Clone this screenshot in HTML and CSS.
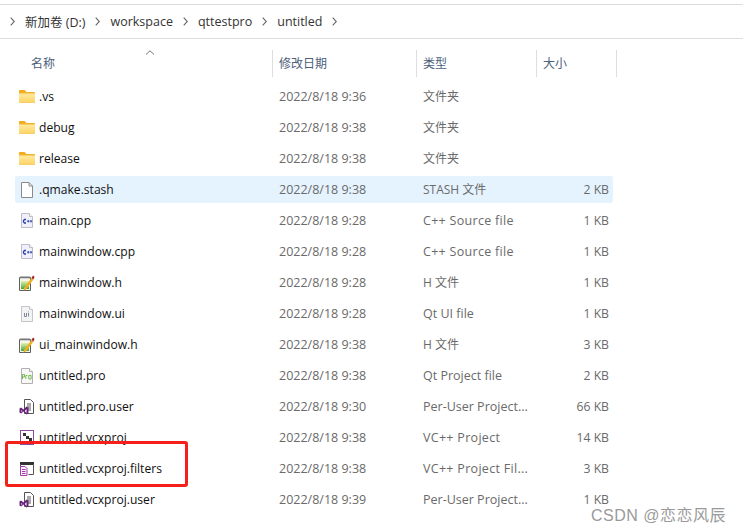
FILE: index.html
```html
<!DOCTYPE html>
<html lang="zh-CN">
<head>
<meta charset="utf-8">
<title>untitled</title>
<link rel="stylesheet" href="styles.css">
</head>
<body>
<svg class="defs" width="0" height="0" aria-hidden="true">
  <defs>
    <linearGradient id="fold" x1="0" y1="0" x2="0" y2="1"><stop offset="0" stop-color="#ffe9a0"/><stop offset="1" stop-color="#fcd566"/></linearGradient>
    <linearGradient id="note" x1="0" y1="0" x2="0" y2="1"><stop offset="0" stop-color="#e8f0b0"/><stop offset="1" stop-color="#3fa53a"/></linearGradient>
    <symbol id="i-chev" viewBox="0 0 5 9">
      <path d="M.7.7 4.300 4.500.7 8.300" fill="none" stroke="#666" stroke-width="1.100"/>
    </symbol>
    <symbol id="i-folder" viewBox="0 0 16 16">
      <path d="M0 2C0 1.500.4 1 1 1h4.500L7.500 3H0Z" fill="#f0ac1a"/>
      <path d="M0 3h15.200c.4 0 .8.3.8.8v9c0 .5-.4.900-.9.900H.9c-.5 0-.9-.4-.9-.9Z" fill="#f2b32b"/>
      <path d="M0 4.500h16v8.200c0 .5-.4.8-.8.8H.8c-.5 0-.8-.3-.8-.8Z" fill="url(#fold)"/>
    </symbol>
    <symbol id="i-blank" viewBox="0 0 16 16">
      <path d="M2.500.500h7.500l3.500 3.500V15.500H2.500Z" fill="#fff" stroke="#8a8a8a"/>
      <path d="M10 .5V4h3.500" fill="none" stroke="#8a8a8a"/>
    </symbol>
    <symbol id="i-cpp" viewBox="0 0 16 16">
      <path d="M2.500.500h8l3 3V14.500H2.500Z" fill="#f1f0fa" stroke="#bdbdc6"/>
      <path d="M10.500.500v3h3" fill="#fff" stroke="#bdbdc6"/>
      <path d="M7 6.500H5.500L4.500 7.500v1.500l1 1H7" fill="none" stroke="#2a3fa8" stroke-width="1.300"/>
      <path d="M8 8.200h2.400M9.200 7v2.500M10.800 8.200h2.400M12 7v2.500" fill="none" stroke="#2a3fa8" stroke-width=".9"/>
    </symbol>
    <symbol id="i-h" viewBox="0 0 16 16">
      <path d="M.5 2.500h11v13H.5Z" fill="#f6f6f0" stroke="#5f5f5f"/>
      <path d="M1 2.500h10M2 1v2.500M4 1v2.500M6 1v2.500M8 1v2.500M10 1v2.500" stroke="#777" fill="none"/>
      <rect x="2" y="6" width="8" height="8" fill="url(#note)"/>
      <path d="M5 13 12.500 3l2 1.500L7 14.500l-2.500 1Z" fill="#f0b020"/>
      <path d="M12.500 3 14 .5l1.500 1.200-1 2.800Z" fill="#a3232b"/>
    </symbol>
    <symbol id="i-ui" viewBox="0 0 16 16">
      <path d="M2.500.500h8l3 3V15.500H2.500Z" fill="#f3f3f6" stroke="#c4c4ca"/>
      <path d="M10.500.500v3h3" fill="#fff" stroke="#c4c4ca"/>
      <path d="M5.500 7v3.500h2V7M9.500 7v3.500M9.500 5.500v.8" fill="none" stroke="#7d8a9c"/>
    </symbol>
    <symbol id="i-pro" viewBox="0 0 16 16">
      <path d="M2.500.500h8l3 3V15.500H2.500Z" fill="#f7f7f7" stroke="#b0b0b0"/>
      <path d="M10.500.500v3h3" fill="#fff" stroke="#b0b0b0"/>
      <path d="M3.500 11V6.500h2v2.500h-2M6.800 11V7.500h1.600M9.800 7.500h2.300V11H9.800Z" fill="none" stroke="#6db33f" stroke-width=".9"/>
    </symbol>
    <symbol id="i-user" viewBox="0 0 16 16">
      <path d="M5.500.500h6l3 3v11h-9Z" fill="#fff" stroke="#555"/>
      <path d="M8 5h4M8 7h4M9 9h3M9 11h3" stroke="#555" fill="none"/>
      <path d="M.5 9.500 2 8.500l2.500 2 3-3 2 1v6l-2 1-3-3-2.500 2-1.500-1Zm1.800 1.500v2l1.200-1Zm5.200-.9L5.800 12l1.700 1.900Z" fill="#68217a"/>
    </symbol>
    <symbol id="i-proj" viewBox="0 0 16 16">
      <rect x="1.500" y=".5" width="13" height="14" fill="#fff" stroke="#8e4a9e"/>
      <path d="M4 3h3v3H4ZM7 6h3v3H7ZM10 8h3v3h-3Z" fill="#333"/>
    </symbol>
    <symbol id="i-filters" viewBox="0 0 16 16">
      <rect x="1" y="1" width="14" height="3" fill="#333"/>
      <path d="M1.500 3v3M14.500 3v10.500H9.500" fill="none" stroke="#555"/>
      <path d="M1.500 5.500h4.500l2 2v7H1.500Z" fill="#f7eef9" stroke="#a23fa8"/>
      <path d="M3 8.500h3.500M3 10.500h3.500M3 12.500h3.500" stroke="#a23fa8" fill="none"/>
    </symbol>
  </defs>
</svg>

<div class="window">
  <nav class="crumbs">
    <svg class="chev"><use href="#i-chev"/></svg><span class="crumb">新加卷 (D:)</span>
    <svg class="chev"><use href="#i-chev"/></svg><span class="crumb">workspace</span>
    <svg class="chev"><use href="#i-chev"/></svg><span class="crumb">qttestpro</span>
    <svg class="chev"><use href="#i-chev"/></svg><span class="crumb">untitled</span>
    <svg class="chev"><use href="#i-chev"/></svg>
  </nav>

  <div class="head">
    <div class="hcell hname">名称<svg class="caret" width="10" height="5" viewBox="0 0 10 5"><path d="M1 4.500 5 .8l4 3.700" fill="none" stroke="#777"/></svg></div>
    <div class="hcell">修改日期</div>
    <div class="hcell">类型</div>
    <div class="hcell">大小</div>
  </div>

  <div class="list">
    <div class="row"><div class="name"><svg class="ico"><use href="#i-folder"/></svg>.vs</div><div class="cell">2022/8/18 9:36</div><div class="cell zh">文件夹</div><div class="size"></div></div>
    <div class="row"><div class="name"><svg class="ico"><use href="#i-folder"/></svg>debug</div><div class="cell">2022/8/18 9:38</div><div class="cell zh">文件夹</div><div class="size"></div></div>
    <div class="row"><div class="name"><svg class="ico"><use href="#i-folder"/></svg>release</div><div class="cell">2022/8/18 9:38</div><div class="cell zh">文件夹</div><div class="size"></div></div>
    <div class="row selected"><div class="name"><svg class="ico"><use href="#i-blank"/></svg>.qmake.stash</div><div class="cell">2022/8/18 9:38</div><div class="cell zh">STASH 文件</div><div class="size">2 KB</div></div>
    <div class="row"><div class="name"><svg class="ico"><use href="#i-cpp"/></svg>main.cpp</div><div class="cell">2022/8/18 9:28</div><div class="cell wide">C++ Source file</div><div class="size">1 KB</div></div>
    <div class="row"><div class="name"><svg class="ico"><use href="#i-cpp"/></svg>mainwindow.cpp</div><div class="cell">2022/8/18 9:28</div><div class="cell wide">C++ Source file</div><div class="size">1 KB</div></div>
    <div class="row"><div class="name"><svg class="ico"><use href="#i-h"/></svg>mainwindow.h</div><div class="cell">2022/8/18 9:28</div><div class="cell zh">H 文件</div><div class="size">1 KB</div></div>
    <div class="row"><div class="name"><svg class="ico"><use href="#i-ui"/></svg>mainwindow.ui</div><div class="cell">2022/8/18 9:28</div><div class="cell">Qt UI file</div><div class="size">1 KB</div></div>
    <div class="row"><div class="name"><svg class="ico"><use href="#i-h"/></svg>ui_mainwindow.h</div><div class="cell">2022/8/18 9:38</div><div class="cell zh">H 文件</div><div class="size">3 KB</div></div>
    <div class="row"><div class="name"><svg class="ico"><use href="#i-pro"/></svg>untitled.pro</div><div class="cell">2022/8/18 9:38</div><div class="cell">Qt Project file</div><div class="size">2 KB</div></div>
    <div class="row"><div class="name"><svg class="ico"><use href="#i-user"/></svg>untitled.pro.user</div><div class="cell">2022/8/18 9:30</div><div class="cell">Per-User Project...</div><div class="size">66 KB</div></div>
    <div class="row"><div class="name"><svg class="ico"><use href="#i-proj"/></svg>untitled.vcxproj</div><div class="cell">2022/8/18 9:38</div><div class="cell wide">VC++ Project</div><div class="size">14 KB</div></div>
    <div class="row"><div class="name"><svg class="ico"><use href="#i-filters"/></svg>untitled.vcxproj.filters</div><div class="cell">2022/8/18 9:38</div><div class="cell wide">VC++ Project Fil...</div><div class="size">3 KB</div></div>
    <div class="row"><div class="name"><svg class="ico"><use href="#i-user"/></svg>untitled.vcxproj.user</div><div class="cell">2022/8/18 9:39</div><div class="cell">Per-User Project...</div><div class="size">1 KB</div></div>
  </div>

  <div class="redbox"></div>
  <div class="mark">CSDN @恋恋风辰</div>
</div>
</body>
</html>
```

FILE: styles.css
```css
* { box-sizing: border-box; }
html, body { margin: 0; padding: 0; background: #fff; }
body {
  font-family: "Open Sans", "Noto Sans CJK SC", sans-serif;
  font-size: 12.1px;
  color: #1c1c1c;
  overflow: hidden;
}
.defs { position: absolute; }
.window {
  position: relative;
  width: 743px;
  height: 532px;
  padding-top: 4px;
  overflow: hidden;
}
.crumbs {
  display: flex;
  align-items: center;
  height: 35px;
  padding-left: 10px;
  border-top: 1px solid #dcdcdc;
  border-bottom: 1px solid #dcdcdc;
  color: #333;
  font-size: 12.5px;
}
.crumb { white-space: nowrap; }
.chev { flex: none; width: 5px; height: 9px; margin-right: 10px; }
.crumb + .chev { margin-left: 10px; }
.head {
  display: grid;
  grid-template-columns: 258px 144px 120px 80px;
  margin: 11px 0 0 15px;
  width: 602px;
  height: 27px;
}
.hcell {
  position: relative;
  display: flex;
  align-items: center;
  padding: 0 0 1px 6px;
  border-right: 1px solid #dedede;
  color: #4c607a;
  font-size: 12px;
}
.hname { padding-left: 16px; }
.caret { position: absolute; left: 130px; top: 0; }
.list {
  display: flex;
  flex-direction: column;
  gap: 4px;
  margin: 6px 0 0 15px;
  width: 598px;
}
.row {
  display: grid;
  grid-template-columns: 257px 144px 120px 77px;
  align-items: center;
  height: 27px;
  border-radius: 2px;
}
.selected { background: #e5f3ff; }
.name {
  display: flex;
  align-items: center;
  gap: 4px;
  padding-left: 4px;
  color: #111;
  white-space: nowrap;
}
.ico { width: 16px; height: 16px; flex: none; }
.cell {
  padding-left: 7px;
  color: #6a6a6a;
  font-size: 12.5px;
  white-space: nowrap;
}
.zh { padding-bottom: 2px; font-size: 12px; }
.wide { letter-spacing: 0.3px; }
.size {
  padding-right: 4px;
  text-align: right;
  color: #6a6a6a;
  font-size: 12.2px;
  white-space: nowrap;
}
.redbox {
  position: absolute;
  left: 5px;
  top: 441px;
  width: 183px;
  height: 46px;
  border: 3px solid #f5201a;
  border-radius: 3px;
}
.mark {
  position: absolute;
  left: 591px;
  top: 502px;
  font-family: "Liberation Sans", "Noto Sans CJK SC", sans-serif;
  font-size: 16px;
  letter-spacing: 0.5px;
  color: #9a9a9a;
  white-space: nowrap;
}
```
